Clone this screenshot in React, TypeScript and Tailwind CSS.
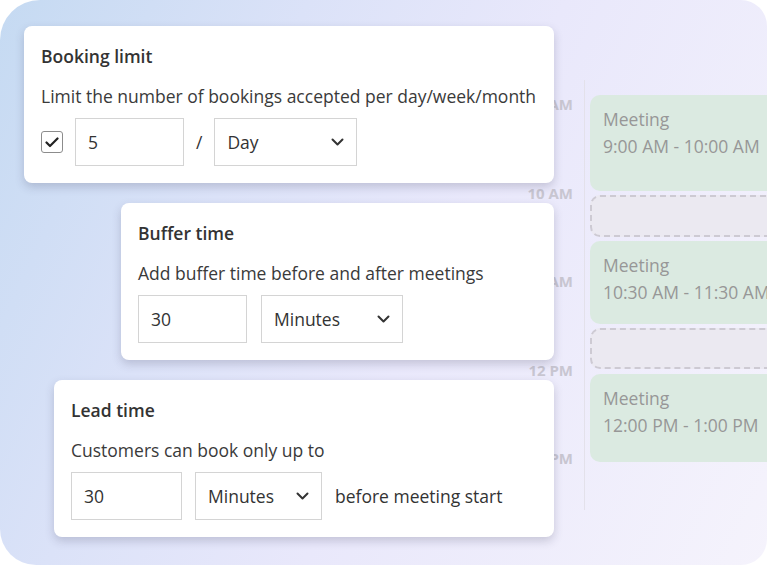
import type { ReactNode } from "react";

const FONT = { fontFamily: '"Open Sans", "Noto Sans", sans-serif' };

function Chevron() {
  return (
    <svg width="13" height="8" viewBox="0 0 13 8" fill="none" className="shrink-0">
      <path d="M1.5 1.5 L6.5 6.5 L11.5 1.5" stroke="#333" strokeWidth="2" strokeLinecap="round" strokeLinejoin="round" />
    </svg>
  );
}

function Field({ value, width }: { value: string; width: string }) {
  return (
    <div className={`flex h-[48px] ${width} items-center border border-[#d4d4d4] bg-white pl-[12px] text-[17.5px] text-[#333]`}>
      {value}
    </div>
  );
}

function Select({ value, width }: { value: string; width: string }) {
  return (
    <div
      className={`flex h-[48px] ${width} items-center justify-between border border-[#d4d4d4] bg-white pl-[12px] pr-[12px] text-[17.5px] text-[#333]`}
    >
      <span>{value}</span>
      <Chevron />
    </div>
  );
}

function Card({ title, text, width, children }: { title: string; text: string; width: string; children: ReactNode }) {
  return (
    <div className={`${width} rounded-[8px] bg-white px-[17px] pb-[17px] pt-[18px] shadow-[0_4px_10px_rgba(60,60,90,0.22)]`}>
      <div className="text-[17.5px] font-semibold leading-[24px] text-[#333]">{title}</div>
      <div className="mt-[16px] whitespace-nowrap text-[17.5px] leading-[24px] text-[#3a3a3a]">{text}</div>
      <div className="mt-[10px] flex items-center">{children}</div>
    </div>
  );
}

function Meeting({ time, height }: { time: string; height: string }) {
  return (
    <div className={`${height} rounded-l-[10px] bg-[#dbeae1] pl-[13px] pt-[11px] text-[17.5px] leading-[27px] text-[#979797]`}>
      <div>Meeting</div>
      <div className="whitespace-nowrap">{time}</div>
    </div>
  );
}

function Gap({ height }: { height: string }) {
  return <div className={`${height} rounded-l-[10px] border-2 border-r-0 border-dashed border-[#cdcad3] bg-[#ebe9f1]`} />;
}

export default function App() {
  const labels = ["9 AM", "10 AM", "11 AM", "12 PM", "1 PM"];
  return (
    <div className="h-[565px] w-[767px] overflow-hidden bg-white" style={FONT}>
      <div className="grid h-full w-full rounded-bl-[36px] rounded-r-[26px] rounded-tl-[40px] bg-[linear-gradient(115deg,#c5daf2_0%,#dbe2f8_30%,#e9e8fb_55%,#f5f3fc_100%)]">
        {/* calendar layer */}
        <div className="col-start-1 row-start-1 flex">
          <div className="flex w-[573px] flex-col items-end gap-[68.5px] pt-[94px] text-[15px] font-bold leading-[20px] text-[#c8c6d1]">
            {labels.map((l) => (
              <div key={l}>{l}</div>
            ))}
          </div>
          <div className="ml-[11px] mt-[80px] h-[430px] w-px bg-[#e3e1ea]" />
          <div className="ml-[5px] flex flex-1 flex-col pt-[95px]">
            <Meeting time="9:00 AM - 10:00 AM" height="h-[96px]" />
            <div className="mt-[4px]">
              <Gap height="h-[42px]" />
            </div>
            <div className="mt-[4px]">
              <Meeting time="10:30 AM - 11:30 AM" height="h-[83px]" />
            </div>
            <div className="mt-[4px]">
              <Gap height="h-[41px]" />
            </div>
            <div className="mt-[5px]">
              <Meeting time="12:00 PM - 1:00 PM" height="h-[88px]" />
            </div>
          </div>
        </div>

        {/* settings cards */}
        <div className="col-start-1 row-start-1 flex w-[554px] flex-col items-end gap-[20px] pt-[26px]">
          <Card title="Booking limit" text="Limit the number of bookings accepted per day/week/month" width="w-[530px]">
            <div className="mr-[12px] flex h-[22px] w-[22px] items-center justify-center rounded-[3px] border-[1.5px] border-[#8c8c8c]">
              <svg width="14" height="11" viewBox="0 0 14 11" fill="none">
                <path d="M1.5 5.5 L5 9 L12.5 1.5" stroke="#222" strokeWidth="2.2" strokeLinecap="round" strokeLinejoin="round" />
              </svg>
            </div>
            <Field value="5" width="w-[109px]" />
            <span className="mx-[12px] text-[17.5px] text-[#333]">/</span>
            <Select value="Day" width="w-[143px]" />
          </Card>
          <Card title="Buffer time" text="Add buffer time before and after meetings" width="w-[433px]">
            <Field value="30" width="w-[109px]" />
            <div className="ml-[14px]">
              <Select value="Minutes" width="w-[142px]" />
            </div>
          </Card>
          <Card title="Lead time" text="Customers can book only up to" width="w-[500px]">
            <Field value="30" width="w-[111px]" />
            <div className="ml-[13px]">
              <Select value="Minutes" width="w-[127px]" />
            </div>
            <span className="ml-[13px] text-[17.5px] text-[#333]">before meeting start</span>
          </Card>
        </div>
      </div>
    </div>
  );
}
